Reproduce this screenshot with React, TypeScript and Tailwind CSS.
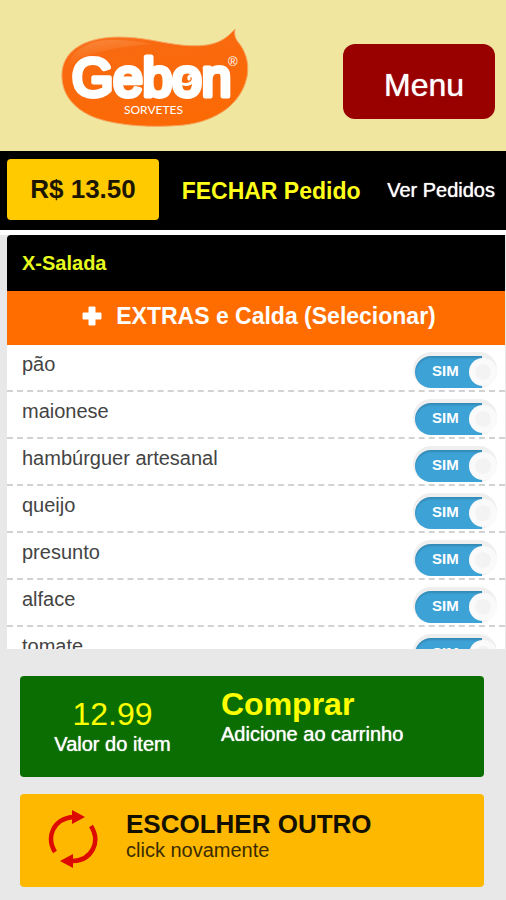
import { useState } from "react";

interface Extra {
  id: string;
  name: string;
}

const extras: Extra[] = [
  { id: "pao", name: "pão" },
  { id: "maionese", name: "maionese" },
  { id: "hamburguer", name: "hambúrguer artesanal" },
  { id: "queijo", name: "queijo" },
  { id: "presunto", name: "presunto" },
  { id: "alface", name: "alface" },
  { id: "tomate", name: "tomate" },
];

function Logo() {
  return (
    <svg
      viewBox="0 0 190 100"
      role="img"
      aria-label="Gebon Sorvetes"
      className="h-[100px] w-[190px]"
    >
      <defs>
        <linearGradient id="drop" x1="0" y1="0" x2="0.35" y2="1">
          <stop offset="0" stopColor="#f47a2c" />
          <stop offset="0.3" stopColor="#f9690f" />
          <stop offset="1" stopColor="#fb6a05" />
        </linearGradient>
        <linearGradient id="shine" x1="0" y1="0" x2="0.3" y2="1">
          <stop offset="0" stopColor="#ffc08a" stopOpacity="0.3" />
          <stop offset="1" stopColor="#ff8a3c" stopOpacity="0" />
        </linearGradient>
      </defs>
      <path
        d="M175 2C168 10 160 16 147 18C125 21 104 15 84 12C62 9 42 9 25 16C9 23 1 35 2 51C3 69 15 83 36 91C59 99 93 101 124 98C157 94 181 77 187 50C190 34 184 22 178 15C175 11 174 7 175 2Z"
        fill="url(#drop)"
        stroke="#f8a45c"
        strokeWidth="1"
      />
      <path
        d="M6 44C8 26 28 13 50 13C68 13 80 15 92 17C64 20 24 22 6 44Z"
        fill="url(#shine)"
      />
      <g
        fill="#fff"
        stroke="#fff"
        strokeLinejoin="round"
        fontFamily="'Liberation Sans', Arial, sans-serif"
      >
        <text x="12" y="69" fontSize="53" strokeWidth="5">
          Gebon
        </text>
        <text
          x="64"
          y="87"
          fontSize="12"
          strokeWidth="0"
          fontFamily="Lato, sans-serif"
        >
          SORVETES
        </text>
        <text x="168" y="39" fontSize="13" strokeWidth="0">
          ®
        </text>
      </g>
      {/* curl inside the "o" */}
      <path
        d="M120 56C128 60 135 55 133 50C132 47 128 49 129 52"
        fill="none"
        stroke="#fff"
        strokeWidth="3"
        strokeLinecap="round"
      />
    </svg>
  );
}

function RefreshArrows() {
  return (
    <svg viewBox="0 0 50 58" aria-hidden="true" className="h-[58px] w-[50px]">
      <g fill="none" stroke="#dc0a00" strokeWidth="4.5">
        <path d="M7 42C-2 27 5 9 25 7" />
        <path d="M43 16C53 32 44 50 25 51" />
      </g>
      <path d="M24 0L37 7L24 14Z" fill="#dc0a00" />
      <path d="M25 44L12 51L25 58Z" fill="#dc0a00" />
    </svg>
  );
}

function ExtraRow({ extra }: { extra: Extra }) {
  const [checked, setChecked] = useState(true);

  return (
    <li className="flex h-[47px] items-start justify-between border-b-2 border-dashed border-[#d2d2d2] pt-[7px] pr-2 pl-[15px]">
      <label
        htmlFor={extra.id}
        className="text-[20px] leading-6 text-[#444]"
      >
        {extra.name}
      </label>

      <label
        htmlFor={extra.id}
        className="relative flex h-9 w-[84px] cursor-pointer items-end rounded-full bg-[#efefef] pl-0.5"
      >
        <input
          id={extra.id}
          type="checkbox"
          checked={checked}
          onChange={() => setChecked(!checked)}
          className="peer sr-only"
        />
        <span className="flex h-8 w-[67px] items-center rounded-l-full bg-[#9a9a9a] pb-0.5 pl-[17px] text-[15px] font-bold text-white inset-shadow-[0_2px_2px_rgba(0,0,0,0.15)] peer-checked:bg-[#3da2d6]">
          {checked ? "SIM" : "NÃO"}
        </span>
        <span className="absolute right-0 bottom-0.5 flex size-7 items-center justify-center rounded-full bg-[#fafafa]">
          <span className="size-4 rounded-full bg-[#f3f3f3]" />
        </span>
      </label>
    </li>
  );
}

export default function App() {
  return (
    <div className="flex h-screen flex-col bg-[#e8e8e8] font-['Liberation_Sans',Arial,sans-serif]">
      <header className="flex h-[151px] shrink-0 items-start justify-between bg-[#f0e69f] pr-[11px] pl-[60px]">
        <a href="#inicio" className="pt-[27px]">
          <Logo />
        </a>
        <button
          type="button"
          className="mt-11 h-[75px] w-[152px] rounded-xl bg-[#990000] pt-1.5 pl-2.5 text-[32px] text-white text-shadow-[0_0_1px_#fff]"
        >
          Menu
        </button>
      </header>

      <nav className="flex h-[79px] shrink-0 items-center justify-between bg-black pr-[11px] pb-0.5 pl-[7px]">
        <button
          type="button"
          className="h-[61px] w-[152px] rounded-sm bg-[#ffcb00] text-[26px] font-bold text-[#1c1600]"
        >
          R$ 13.50
        </button>
        <a
          href="#fechar"
          className="pt-1 pr-1 text-[23px] font-bold text-[#ffff1a]"
        >
          FECHAR Pedido
        </a>
        <a
          href="#pedidos"
          className="text-[20px] text-white text-shadow-[0_0_1px_#fff]"
        >
          Ver Pedidos
        </a>
      </nav>

      <main className="min-h-0 flex-1 overflow-y-auto border-t-5 border-white pr-px pl-[7px] [scrollbar-width:none]">
        <h1 className="h-14 rounded-tl-sm bg-black pt-4 pl-[15px] text-[20px] leading-6 font-bold text-[#e6fa1e]">
          X-Salada
        </h1>
        <h2 className="flex h-[54px] items-center justify-center gap-3.5 bg-[#ff6d00] pb-1 pl-1.5 text-[23px] font-bold text-white">
          <svg viewBox="0 0 20 20" aria-hidden="true" className="size-5">
            <path
              d="M7 1h6v6h6v6h-6v6H7v-6H1V7h6z"
              fill="#fff"
              stroke="#fff"
              strokeLinejoin="round"
            />
          </svg>
          EXTRAS e Calda (Selecionar)
        </h2>
        <ul className="bg-white">
          {extras.map((extra) => (
            <ExtraRow key={extra.id} extra={extra} />
          ))}
        </ul>
      </main>

      <footer className="flex shrink-0 flex-col gap-[17px] pt-[27px] pr-[22px] pb-[13px] pl-5">
        <button
          type="button"
          className="flex h-[101px] items-start rounded-sm bg-[#0b6e02] pt-3 text-left"
        >
          <span className="flex w-[201px] flex-col items-center pt-2.5 pr-4">
            <span className="text-[32px] leading-8 text-[#ffff00]">12.99</span>
            <span className="text-[20px] leading-7 text-white text-shadow-[0_0_1px_#fff]">
              Valor do item
            </span>
          </span>
          <span className="flex flex-col">
            <span className="text-[32px] leading-8 font-bold text-[#ffff00]">
              Comprar
            </span>
            <span className="text-[20px] leading-7 text-white text-shadow-[0_0_1px_#fff]">
              Adicione ao carrinho
            </span>
          </span>
        </button>

        <button
          type="button"
          className="flex h-[93px] items-start gap-7 rounded-sm bg-[#ffb800] pt-4 pl-7 text-left"
        >
          <RefreshArrows />
          <span className="flex flex-col">
            <span className="text-[26px] leading-7 font-bold text-[#141000]">
              ESCOLHER OUTRO
            </span>
            <span className="text-[20px] leading-6 text-[#3a2c00]">
              click novamente
            </span>
          </span>
        </button>
      </footer>
    </div>
  );
}
